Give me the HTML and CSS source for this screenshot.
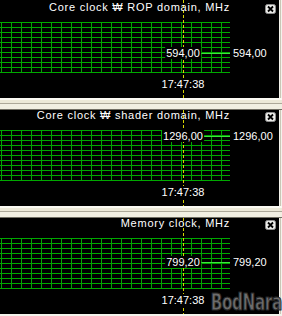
FILE: index.html
```html
<!DOCTYPE html>
<html lang="en">
<head>
    <meta charset="UTF-8">
    <meta name="viewport" content="width=device-width, initial-scale=1.0">
    <title>Hardware monitor</title>
    <link rel="stylesheet" href="styles.css">
</head>
<body>
    <div class="monitor">
        <div class="panel panel-first">
            <div class="cursor"></div>
            <div class="graph">
                <div class="title">Core clock ₩ ROP domain, MHz</div>
                <div class="grid">
                    <div class="level" style="top: 31px">
                        <span class="value">594,00</span>
                        <span class="reading">594,00</span>
                    </div>
                </div>
                <div class="time"><span>17:47:38</span></div>
            </div>
            <div class="side">
                <button class="close" aria-label="Close">
                    <svg width="11" height="10" viewBox="0 0 11 10">
                        <rect x="0.5" y="0.5" width="10" height="9" rx="2" fill="#ecece9" stroke="#8f8f8f"/>
                        <path d="M3 2.5 L8 7.5 M8 2.5 L3 7.5" stroke="#000" stroke-width="1.8"/>
                    </svg>
                </button>
            </div>
        </div>
        <div class="splitter"></div>
        <div class="panel">
            <div class="cursor"></div>
            <div class="graph">
                <div class="title">Core clock ₩ shader domain, MHz</div>
                <div class="grid">
                    <div class="level" style="top: 6px">
                        <span class="value">1296,00</span>
                        <span class="reading">1296,00</span>
                    </div>
                </div>
                <div class="time"><span>17:47:38</span></div>
            </div>
            <div class="side">
                <button class="close" aria-label="Close">
                    <svg width="11" height="10" viewBox="0 0 11 10">
                        <rect x="0.5" y="0.5" width="10" height="9" rx="2" fill="#ecece9" stroke="#8f8f8f"/>
                        <path d="M3 2.5 L8 7.5 M8 2.5 L3 7.5" stroke="#000" stroke-width="1.8"/>
                    </svg>
                </button>
            </div>
        </div>
        <div class="splitter"></div>
        <div class="panel">
            <div class="cursor"></div>
            <div class="graph">
                <div class="title">Memory clock, MHz</div>
                <div class="grid">
                    <div class="level" style="top: 24px">
                        <span class="value">799,20</span>
                        <span class="reading">799,20</span>
                    </div>
                </div>
                <div class="time"><span>17:47:38</span></div>
            </div>
            <div class="side">
                <button class="close" aria-label="Close">
                    <svg width="11" height="10" viewBox="0 0 11 10">
                        <rect x="0.5" y="0.5" width="10" height="9" rx="2" fill="#ecece9" stroke="#8f8f8f"/>
                        <path d="M3 2.5 L8 7.5 M8 2.5 L3 7.5" stroke="#000" stroke-width="1.8"/>
                    </svg>
                </button>
            </div>
        </div>
    </div>
    <div class="watermark">BodNara</div>
</body>
</html>
```

FILE: styles.css
```css
body {
    position: relative;
    margin: 0;
    width: 282px;
    height: 316px;
    overflow: hidden;
    background-color: #f4f3ec;
    font-family: "Liberation Sans", Arial, sans-serif;
    font-size: 11px;
    color: #fff;
}
.monitor {
    width: 282px;
    background: linear-gradient(to right, transparent 280px, #c9c6b6 280px 281px, transparent 281px);
}
.panel {
    position: relative;
    display: flex;
    width: 279px;
    height: 96px;
    background-color: #000;
}
.panel-first {
    box-sizing: border-box;
    height: 98px;
    padding-top: 2px;
}
.cursor {
    position: absolute;
    left: 183px;
    top: 0;
    bottom: 0;
    width: 1px;
    z-index: 1;
    background: repeating-linear-gradient(to bottom, #d6d200 0 3px, transparent 3px 5px);
}
.graph {
    width: 230px;
}
.title {
    position: relative;
    z-index: 2;
    height: 20px;
    line-height: 11px;
    text-align: right;
    letter-spacing: 0.75px;
    white-space: nowrap;
}
.grid {
    position: relative;
    height: 51px;
    background-image:
        repeating-linear-gradient(to bottom, #00a800 0 1px, transparent 1px 5px),
        repeating-linear-gradient(to right, transparent 0 1px, #00a800 1px 2px, transparent 2px 10px);
}
.level {
    position: absolute;
    left: 0;
    width: 230px;
    height: 1px;
    z-index: 2;
}
.level::before {
    content: "";
    position: absolute;
    left: 183px;
    right: 0;
    top: 0;
    height: 1px;
    background-color: #3ee43e;
}
.value {
    position: absolute;
    left: 183px;
    top: -6px;
    transform: translateX(-50%);
    padding: 0 1px;
    line-height: 12px;
    background-color: #000;
    white-space: nowrap;
}
.reading {
    position: absolute;
    left: 233px;
    top: -6px;
    line-height: 12px;
    white-space: nowrap;
}
.time {
    position: relative;
    z-index: 2;
    width: 80px;
    margin: 5px 0 0 143px;
    line-height: 13px;
    text-align: center;
}
.time span {
    padding: 0 1px;
    background-color: #000;
}
.side {
    flex: 1;
}
.close {
    display: block;
    width: 11px;
    height: 10px;
    margin: 2px 0 0 35px;
    padding: 0;
    border: none;
    background: none;
    cursor: pointer;
}
.close svg {
    display: block;
}
.splitter {
    height: 12px;
    background: linear-gradient(to bottom, #fbfaf3 0 2px, #ece9d8 2px 5px, #aca899 5px 6px, #f1efe2 6px 11px, #716f64 11px 12px);
}
.watermark {
    position: absolute;
    right: 0;
    bottom: 0;
    font-family: "DejaVu Sans", sans-serif;
    font-weight: bold;
    font-size: 23px;
    line-height: 27px;
    letter-spacing: -0.5px;
    color: #6c6c6c;
    -webkit-text-stroke: 1.2px #262626;
    transform: scaleX(0.66);
    transform-origin: right bottom;
}
```
